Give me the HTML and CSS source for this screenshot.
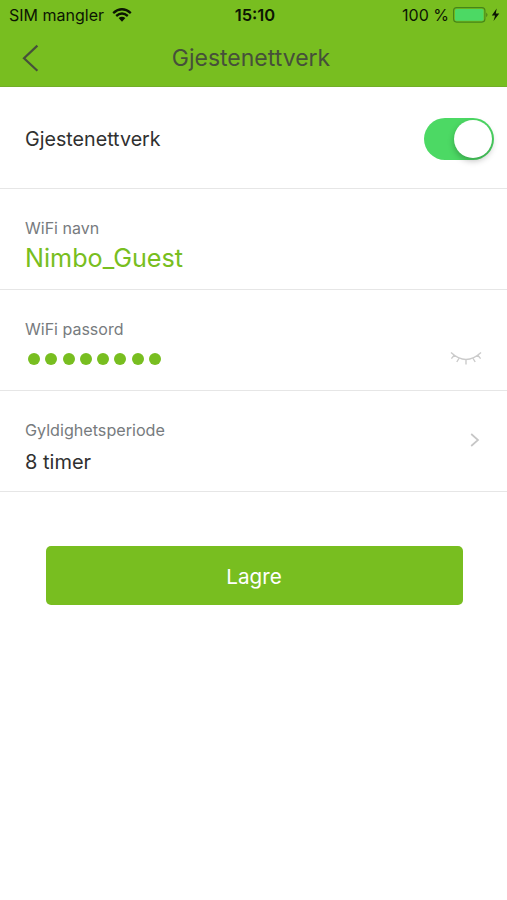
FILE: index.html
```html
<!DOCTYPE html>
<html lang="no">
<head>
<meta charset="utf-8">
<title>Gjestenettverk</title>
<link rel="stylesheet" href="styles.css">
</head>
<body>
<header class="header">
  <div class="status">
    <div class="status-left"><span class="carrier">SIM mangler</span>
      <svg class="wifi" width="20" height="14" viewBox="0 0 20 14" fill="none" stroke="#0c1503" stroke-width="2.4"><path d="M1.2 5.1Q10-2.4 18.8 5.1M4.2 8Q10 3.1 15.8 8"/><path d="M6.6 10.1Q10 7.2 13.4 10.1L10 13.7Z" fill="#0c1503" stroke="none"/></svg>
    </div>
    <span class="clock">15:10</span>
    <div class="status-right"><span class="percent">100 %</span>
      <svg class="battery" width="48" height="16" viewBox="0 0 48 16"><rect x=".6" y=".6" width="31.3" height="14.5" rx="3" fill="none" stroke="#45851a" stroke-width="1.1"/><rect x="2" y="2" width="28.5" height="11.7" rx="1.5" fill="#4cd964"/><path d="M33.3 5.5Q35.6 7.8 33.3 10.2Z" fill="#45751a"/><path d="M43.7 1.5L38.8 8.6h3.3L40.5 14 46.3 6.5h-3.5Z" fill="#0c1503"/></svg>
    </div>
  </div>
  <div class="nav">
    <svg class="back" width="18" height="28" viewBox="0 0 18 28" fill="none" stroke="#46503a" stroke-width="2.2"><path d="M15.4 1.6L2 14.2 15.4 26.8"/></svg>
    <h1 class="title">Gjestenettverk</h1>
  </div>
</header>
<main>
  <section class="row row-toggle"><span class="name">Gjestenettverk</span><span class="switch"><span class="knob"></span></span></section>
  <section class="row"><div class="field"><span class="label">WiFi navn</span><span class="value ssid">Nimbo_Guest</span></div></section>
  <section class="row"><div class="field"><span class="label">WiFi passord</span><span class="value dots"><i></i><i></i><i></i><i></i><i></i><i></i><i></i><i></i></span></div>
    <svg class="eye" width="32" height="15" viewBox="0 0 32 15" fill="none" stroke="#cbcbcb" stroke-width="1.4"><path d="M1 1.5Q16 15.5 31 1.5M4.2 4.2L1.4 7.6M9.2 7L6.8 11M16 8.5V13.5M22.8 7L25.2 11M27.8 4.2L30.6 7.6"/></svg>
  </section>
  <section class="row"><div class="field"><span class="label period-label">Gyldighetsperiode</span><span class="value period">8 timer</span></div>
    <svg class="chevron" width="10" height="14" viewBox="0 0 10 14" fill="none" stroke="#c6c6c6" stroke-width="1.7"><path d="M1.2 1L8 7 1.2 13"/></svg>
  </section>
  <button class="save">Lagre</button>
</main>
</body>
</html>
```
FILE: styles.css
```css
* { box-sizing: border-box; }
body { margin: 0; background: #fff; font-family: Inter, "Liberation Sans", sans-serif; color: #303030; }
.header { height: 87px; background: #78be20; border-bottom: 1px solid #72ae28; }
.status { display: grid; grid-template-columns: 1fr auto 1fr; align-items: center; height: 30px; padding: 0 6px 0 9px; color: #0c1503; font-size: 16px; }
.status-left, .status-right { display: flex; align-items: center; }
.status-left { gap: 8px; }
.status-right { justify-content: flex-end; gap: 4px; }
.clock { font-size: 16.5px; font-weight: 600; }
.nav { display: grid; grid-template-columns: 50px 1fr 55px; align-items: center; height: 56px; }
.back { margin-left: 22px; }
.title { margin: 0; text-align: center; font-size: 23px; font-weight: 400; color: #46503a; }
.row { display: flex; justify-content: space-between; height: 101px; padding-left: 25px; border-bottom: 1px solid #e6e6e6; }
.row-toggle { align-items: center; height: 102px; padding: 3px 13px 0 25px; }
.name { font-size: 19.7px; }
.switch { display: flex; justify-content: flex-end; width: 70px; height: 42px; padding: 2px; border-radius: 21px; background: #4cd964; }
.knob { width: 38px; height: 38px; border-radius: 50%; background: #fff; box-shadow: 0 3px 6px rgba(0,0,0,.25); }
.field { display: flex; flex-direction: column; padding-top: 28px; }
.label { font-size: 16px; line-height: 22px; color: #777b7e; }
.period-label { font-size: 16.15px; }
.value { white-space: nowrap; }
.ssid { font-size: 25.2px; line-height: 38px; color: #78be20; }
.dots { display: flex; gap: 5.3px; margin: 13px 0 0 3px; }
.dots i { width: 12px; height: 12px; border-radius: 50%; background: #78be20; }
.period { font-size: 20px; line-height: 42px; }
.eye { margin: 61px 25px 0 0; }
.chevron { margin: 42px 27px 0 0; }
.save { display: block; width: 417px; height: 59px; margin: 54px 0 0 45.5px; padding: 2px 0 0; border: 0; border-radius: 5px; background: #78be20; color: #fff; font: 400 20.7px Inter, "Liberation Sans", sans-serif; }
```
